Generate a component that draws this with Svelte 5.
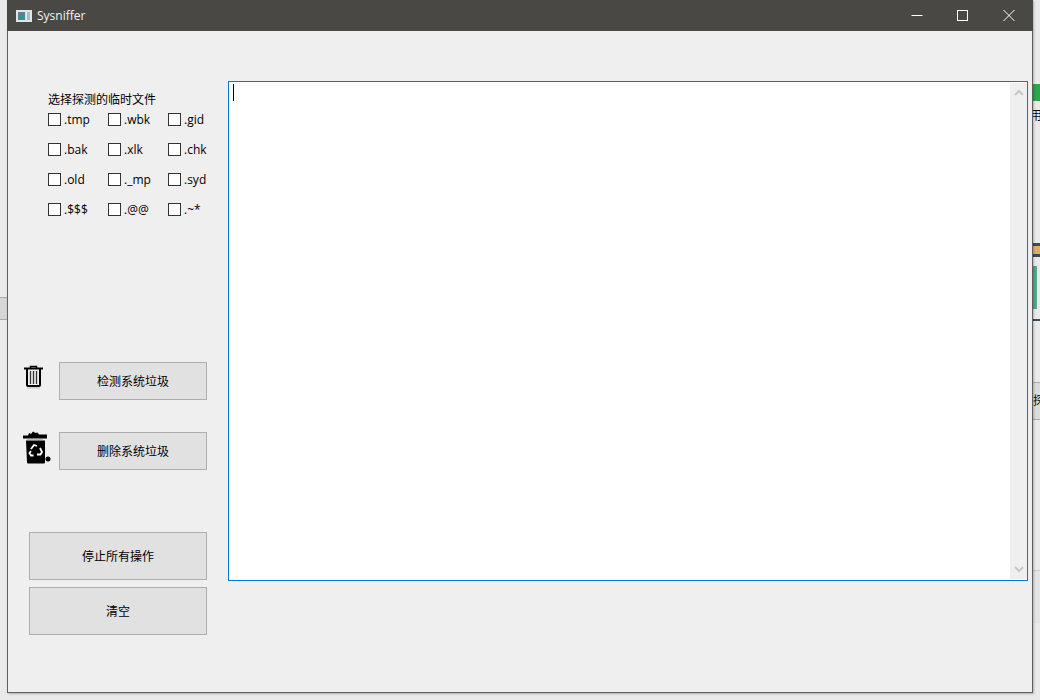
<script>
  const fileTypes = ['.tmp', '.wbk', '.gid', '.bak', '.xlk', '.chk', '.old', '._mp', '.syd', '.$$$', '.@@', '.~*']
</script>

<div class="desktop">
  <!-- bits of the other windows showing behind -->
  <div class="bg left-band"></div>
  <div class="bg right-green"></div>
  <div class="bg right-glyph">用</div>
  <div class="bg right-stripe"></div>
  <div class="bg right-teal"></div>
  <div class="bg right-line"></div>
  <div class="bg right-cell"><span>探</span></div>
  <div class="bg right-low"></div>

  <div class="window">
    <div class="titlebar">
      <svg class="app-icon" width="16" height="12" viewBox="0 0 16 12">
        <rect x="0" y="0" width="16" height="12" fill="#dfe6e6" />
        <rect x="2" y="2" width="7" height="8" fill="#3d8f8f" />
        <rect x="2" y="2" width="7" height="3" fill="#5d7f9c" />
        <rect x="11" y="2" width="3" height="8" fill="#a9c0c4" />
      </svg>
      <span class="title">Sysniffer</span>
      <div class="caption">
        <svg width="46" height="31" viewBox="0 0 46 31"><path d="M17.500 15.500h11" stroke="#fff" /></svg>
        <svg width="46" height="31" viewBox="0 0 46 31"><rect x="17.500" y="10.500" width="10" height="10" fill="none" stroke="#fff" /></svg>
        <svg width="46" height="31" viewBox="0 0 46 31"><path d="M17.500 10l11 11M28.500 10l-11 11" stroke="#fff" fill="none" /></svg>
      </div>
    </div>

    <div class="content">
      <div class="side">
        <div class="types">
          <div class="types-label">选择探测的临时文件</div>
          <div class="types-grid">
            {#each fileTypes as t}
              <label class="check"><span class="box"></span>{t}</label>
            {/each}
          </div>
        </div>

        <div class="action first">
          <svg class="ico-trash" width="21" height="26" viewBox="0 0 21 26">
            <path d="M1 4.500h19" stroke="#000" stroke-width="2" />
            <path d="M7.500 4V2.500h6V4" stroke="#000" stroke-width="1.500" fill="none" />
            <path d="M4 5v16q0 1 1 1h11q1 0 1-1V5" stroke="#000" stroke-width="2" fill="none" />
            <path d="M7.500 7v13M10.500 7v13M13.500 7v13" stroke="#333" stroke-width="1.300" />
            <path d="M4 24h13" stroke="#ccc" stroke-width="1.500" />
          </svg>
          <button>检测系统垃圾</button>
        </div>
        <div class="action second">
          <svg class="ico-bin" width="28" height="34" viewBox="0 0 28 34">
            <path d="M0 4.500h5l1-2.500 2 1 2-2.500 2.500 1.500 2-.5 1.500 2h8v4H0z" fill="#000" />
            <path d="M3 9.500h19v22q0 1-1 1H5q-1 0-1-1z" fill="#000" />
            <path d="M4 8.700h16" stroke="#999" stroke-width=".7" />
            <path d="M8 18l3-4 3 1M17 17l2 4-1.500 2.500H14M10.500 24.500H8l-1.500-2.500 1.500-2" stroke="#fff" stroke-width="1.800" fill="none" />
            <circle cx="25" cy="28" r="2.500" fill="#000" />
          </svg>
          <button>删除系统垃圾</button>
        </div>

        <button class="wide stop">停止所有操作</button>
        <button class="wide clear">清空</button>
      </div>

      <div class="editor">
        <div class="caret"></div>
        <div class="scrollbar">
          <svg width="10" height="7" viewBox="0 0 10 7"><path d="M1 6l4-4 4 4" stroke="#c8c8c8" stroke-width="2" fill="none" /></svg>
          <svg width="10" height="7" viewBox="0 0 10 7"><path d="M1 1l4 4 4-4" stroke="#c8c8c8" stroke-width="2" fill="none" /></svg>
        </div>
      </div>
    </div>
  </div>
</div>

<style>
  :global(body) {
    margin: 0;
    background: #ececec;
  }
  .desktop {
    position: relative;
    width: 1040px;
    height: 700px;
    overflow: hidden;
    background: #eaeaea;
    font-family: "Open Sans", "Noto Sans CJK SC", sans-serif;
    font-size: 12px;
    color: #000;
  }
  .bg {
    position: absolute;
  }
  .left-band {
    left: 0;
    top: 297px;
    width: 8px;
    height: 21px;
    background: #d6d6d6;
    border-top: 1px solid #aaa;
    border-bottom: 1px solid #aaa;
  }
  .right-green {
    left: 1033px;
    top: 84px;
    width: 7px;
    height: 17px;
    background: #2aa84a;
  }
  .right-glyph {
    left: 1033px;
    top: 108px;
    width: 7px;
    overflow: hidden;
    font-size: 12px;
    line-height: 16px;
    text-indent: -3px;
    white-space: nowrap;
  }
  .right-stripe {
    left: 1033px;
    top: 243px;
    width: 7px;
    height: 8px;
    background: #e0b060;
    border-top: 3px solid #3a4a60;
    border-bottom: 3px solid #3a4a60;
  }
  .right-teal {
    left: 1033px;
    top: 266px;
    width: 4px;
    height: 43px;
    background: #55a88c;
  }
  .right-line {
    left: 1033px;
    top: 319px;
    width: 7px;
    height: 2px;
    background: #3a4a60;
  }
  .right-cell {
    left: 1033px;
    top: 382px;
    width: 7px;
    height: 36px;
    background: #dcdcdc;
    border-top: 1px solid #aaa;
    border-bottom: 1px solid #aaa;
    overflow: hidden;
    line-height: 36px;
    white-space: nowrap;
  }
  .right-low {
    left: 1033px;
    top: 570px;
    width: 7px;
    height: 52px;
    background: #e4e4e4;
    border-top: 1px solid #ccc;
  }

  .window {
    position: absolute;
    left: 7px;
    top: 0;
    width: 1024px;
    height: 692px;
    background: #efefef;
    border: 1px solid #5f5f5f;
    border-top: none;
    display: flex;
    flex-direction: column;
    box-shadow: 1px 1px 2px rgba(0, 0, 0, 0.25);
  }
  .titlebar {
    height: 31px;
    margin: 0 -1px;
    background: #4a4845;
    display: flex;
    align-items: center;
    color: #f2f2f2;
    font-size: 12px;
    flex: none;
  }
  .app-icon {
    margin-left: 9px;
    margin-right: 5px;
  }
  .title {
    font-family: "Open Sans", sans-serif;
  }
  .caption {
    margin-left: auto;
    display: flex;
    margin-right: 1px;
    gap: 0;
  }
  .content {
    flex: 1;
    display: flex;
    padding: 50px 4px 0 0;
  }
  .side {
    width: 220px;
    flex: none;
    display: flex;
    flex-direction: column;
  }
  .types {
    margin: 12px 0 0 40px;
  }
  .types-label {
    line-height: 14px;
  }
  .types-grid {
    display: grid;
    grid-template-columns: repeat(3, 60px);
    grid-auto-rows: 30px;
    margin-top: 4px;
  }
  .check {
    display: flex;
    align-items: center;
    height: 16px;
    white-space: nowrap;
  }
  .box {
    width: 11px;
    height: 11px;
    border: 1px solid #333;
    background: #fff;
    margin-right: 3px;
    flex: none;
  }
  .action {
    display: flex;
    position: relative;
    margin-left: 51px;
  }
  .action.first {
    margin-top: 131px;
  }
  .action.second {
    margin-top: 32px;
  }
  .action svg {
    position: absolute;
    display: block;
  }
  .ico-trash {
    left: -36px;
    top: 2px;
  }
  .ico-bin {
    left: -36px;
    top: -1px;
  }
  button {
    font: inherit;
    color: #000;
    background: #e1e1e1;
    border: 1px solid #adadad;
    padding: 0 0 1px;
    width: 148px;
    height: 38px;
    box-sizing: border-box;
    flex: none;
  }
  .wide {
    width: 178px;
    height: 48px;
    margin-left: 21px;
  }
  .stop {
    margin-top: 62px;
  }
  .clear {
    margin-top: 7px;
  }
  .editor {
    position: relative;
    width: 800px;
    height: 500px;
    box-sizing: border-box;
    background: #fff;
    border: 1px solid #0078d7;
    display: flex;
    justify-content: flex-end;
  }
  .caret {
    position: absolute;
    left: 4px;
    top: 2px;
    width: 1px;
    height: 17px;
    background: #000;
  }
  .scrollbar {
    width: 17px;
    margin: 1px 0;
    background: #efefef;
    display: flex;
    flex-direction: column;
    justify-content: space-between;
    align-items: center;
    padding: 6px 0;
    box-sizing: border-box;
  }
</style>
